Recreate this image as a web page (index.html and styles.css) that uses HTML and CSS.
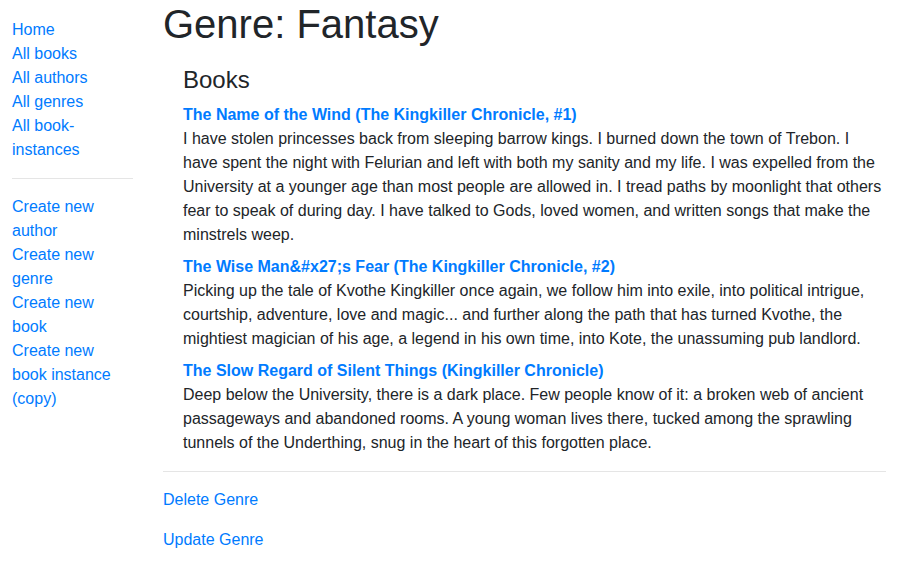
FILE: index.html
```html
<!DOCTYPE html>
<html lang="en">
<head>
<meta charset="utf-8">
<title>Genre: Fantasy</title>
<link rel="stylesheet" href="styles.css">
</head>
<body>
<div class="container">
  <div class="row">
    <div class="col-side">
      <ul class="sidebar-nav">
        <li><a href="#">Home</a></li>
        <li><a href="#">All books</a></li>
        <li><a href="#">All authors</a></li>
        <li><a href="#">All genres</a></li>
        <li><a href="#">All book-instances</a></li>
        <li><hr class="side-hr"></li>
        <li><a href="#">Create new author</a></li>
        <li><a href="#">Create new genre</a></li>
        <li><a href="#">Create new book</a></li>
        <li><a href="#">Create new book instance (copy)</a></li>
      </ul>
    </div>
    <div class="col-main">
      <h1>Genre: Fantasy</h1>
      <div class="books">
        <h4>Books</h4>
        <dl>
          <dt><a href="#">The Name of the Wind (The Kingkiller Chronicle, #1)</a></dt>
          <dd>I have stolen princesses back from sleeping barrow kings. I burned down the town of Trebon. I have spent the night with Felurian and left with both my sanity and my life. I was expelled from the University at a younger age than most people are allowed in. I tread paths by moonlight that others fear to speak of during day. I have talked to Gods, loved women, and written songs that make the minstrels weep.</dd>
          <dt><a href="#">The Wise Man&amp;#x27;s Fear (The Kingkiller Chronicle, #2)</a></dt>
          <dd>Picking up the tale of Kvothe Kingkiller once again, we follow him into exile, into political intrigue, courtship, adventure, love and magic... and further along the path that has turned Kvothe, the mightiest magician of his age, a legend in his own time, into Kote, the unassuming pub landlord.</dd>
          <dt><a href="#">The Slow Regard of Silent Things (Kingkiller Chronicle)</a></dt>
          <dd>Deep below the University, there is a dark place. Few people know of it: a broken web of ancient passageways and abandoned rooms. A young woman lives there, tucked among the sprawling tunnels of the Underthing, snug in the heart of this forgotten place.</dd>
        </dl>
      </div>
      <hr>
      <p><a href="#">Delete Genre</a></p>
      <p><a href="#">Update Genre</a></p>
    </div>
  </div>
</div>
</body>
</html>
```

FILE: styles.css
```css
* { box-sizing: border-box; }
html, body { margin: 0; }
body {
  font-family: "Liberation Sans", Arial, sans-serif;
  font-size: 16px;
  line-height: 1.5;
  color: #212529;
  background: #fff;
}
a { color: #007bff; text-decoration: none; }
.container { padding: 0 12px; }
.row { display: flex; gap: 31px; }
.col-side { flex: 0 0 120px; }
.col-main { flex: 1 1 auto; min-width: 0; }
.sidebar-nav { list-style: none; padding: 0; margin: 18px 0 0; }
hr {
  margin: 16px 0;
  border: 0;
  border-top: 1px solid rgba(0, 0, 0, 0.1);
  height: 0;
}
.side-hr { margin-right: -1px; }
h1 {
  font-size: 40px;
  font-weight: 500;
  line-height: 1.2;
  margin: 0 0 8px;
}
.books { margin: 18px 0 0 20px; }
h4 {
  font-size: 24px;
  font-weight: 500;
  line-height: 1.2;
  margin: 0 0 8px;
}
dl { margin: 0 0 16px; }
dt { font-weight: 700; }
dd { margin: 0 0 8px; }
p { margin: 0 0 16px; }
```
